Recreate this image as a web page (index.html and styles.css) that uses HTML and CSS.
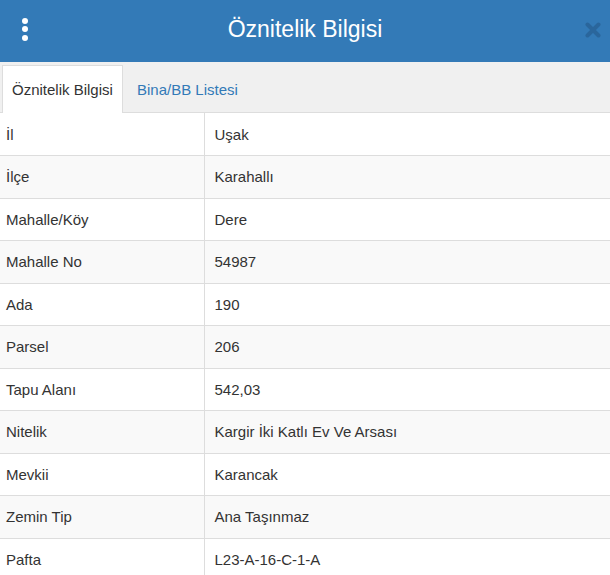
FILE: index.html
```html
<!DOCTYPE html>
<html lang="tr">
<head>
<meta charset="utf-8">
<title>Öznitelik Bilgisi</title>
<link rel="stylesheet" href="styles.css">
</head>
<body>
<div class="panel">
  <header class="header">
    <div class="menu">
      <span class="dot"></span><span class="dot"></span><span class="dot"></span>
    </div>
    <h1 class="title">Öznitelik Bilgisi</h1>
    <svg class="close" width="16" height="16" viewBox="0 0 16 16">
      <path d="M2.5 2.5 L13.5 13.5 M13.5 2.5 L2.5 13.5" stroke="#2a669c" stroke-width="4" stroke-linecap="round"/>
    </svg>
  </header>
  <nav class="tabs">
    <div class="tab active">Öznitelik Bilgisi</div>
    <div class="tab">Bina/BB Listesi</div>
  </nav>
  <table class="attrs">
    <tbody>
      <tr><td class="k">İl</td><td class="v">Uşak</td></tr>
      <tr><td class="k">İlçe</td><td class="v">Karahallı</td></tr>
      <tr><td class="k">Mahalle/Köy</td><td class="v">Dere</td></tr>
      <tr><td class="k">Mahalle No</td><td class="v">54987</td></tr>
      <tr><td class="k">Ada</td><td class="v">190</td></tr>
      <tr><td class="k">Parsel</td><td class="v">206</td></tr>
      <tr><td class="k">Tapu Alanı</td><td class="v">542,03</td></tr>
      <tr><td class="k">Nitelik</td><td class="v">Kargir İki Katlı Ev Ve Arsası</td></tr>
      <tr><td class="k">Mevkii</td><td class="v">Karancak</td></tr>
      <tr><td class="k">Zemin Tip</td><td class="v">Ana Taşınmaz</td></tr>
      <tr><td class="k">Pafta</td><td class="v">L23-A-16-C-1-A</td></tr>
    </tbody>
  </table>
</div>
</body>
</html>
```
FILE: styles.css
```css
html, body {
  margin: 0;
  padding: 0;
  background: #fff;
  font-family: "Liberation Sans", Arial, sans-serif;
  color: #333;
  overflow: hidden;
}

.panel {
  width: 610px;
}

.header {
  height: 62px;
  background: #337ab7;
  display: flex;
  align-items: center;
  justify-content: center;
  position: relative;
}

.menu {
  position: absolute;
  left: 22px;
  top: 18px;
  display: flex;
  flex-direction: column;
  gap: 2.4px;
}

.dot {
  display: block;
  width: 6px;
  height: 6px;
  border-radius: 50%;
  background: #fff;
}

.title {
  margin: 0;
  font-size: 23px;
  font-weight: normal;
  color: #fff;
  line-height: 1;
  padding-bottom: 3px;
}

.close {
  position: absolute;
  right: 9px;
  top: 22px;
}

.tabs {
  height: 51px;
  background: #f0f0f0;
  border-bottom: 1px solid #ddd;
  box-sizing: border-box;
  display: flex;
  align-items: flex-end;
  padding-left: 2px;
  font-size: 15px;
}

.tab {
  height: 46px;
  box-sizing: border-box;
  padding: 12px 10px 0 10px;
  line-height: 20px;
  white-space: nowrap;
  color: #337ab7;
  border: 1px solid transparent;
  border-bottom: none;
  margin-bottom: -1px;
}

.tab.active {
  background: #fff;
  color: #333;
  border-color: #ddd;
  height: 48px;
  width: 121px;
  padding: 14px 0 0 9px;
}

.tab + .tab {
  padding-left: 13px;
}

.attrs {
  width: 610px;
  border-collapse: collapse;
  font-size: 15px;
}

.attrs td {
  line-height: 20px;
  padding: 11px 10px 10.5px 10px;
  border-top: 1px solid #ddd;
}

.attrs tr:first-child td {
  border-top: none;
  padding-top: 11.5px;
}

.attrs tr:nth-child(even) td {
  background: #f9f9f9;
}

.attrs td.k {
  width: 204px;
  padding-left: 6px;
  box-sizing: border-box;
}

.attrs td.v {
  border-left: 1px solid #ddd;
}
```
